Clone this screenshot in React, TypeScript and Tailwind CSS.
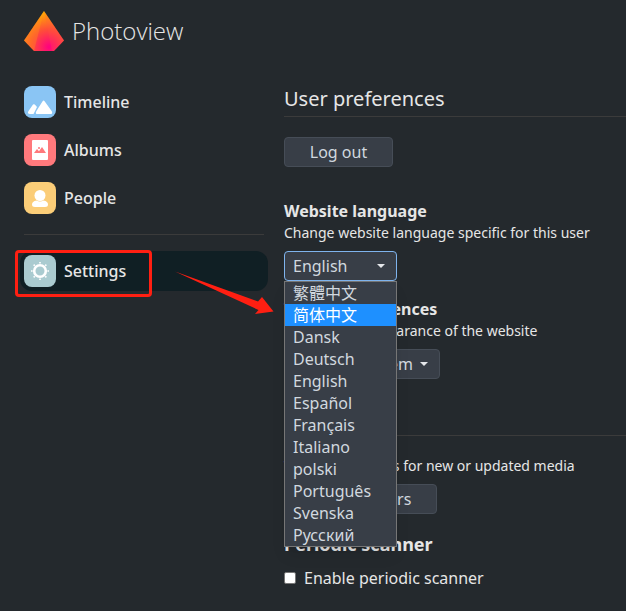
import type { ReactNode } from "react";

const languages = [
  "繁體中文",
  "简体中文",
  "Dansk",
  "Deutsch",
  "English",
  "Español",
  "Français",
  "Italiano",
  "polski",
  "Português",
  "Svenska",
  "Русский",
];

function Logo() {
  return (
    <svg viewBox="0 0 40 40" className="h-10 w-10" aria-hidden="true">
      <defs>
        <radialGradient id="glow" gradientUnits="userSpaceOnUse" cx="25" cy="36" r="36">
          <stop offset="0" stopColor="#ff0080" />
          <stop offset="0.5" stopColor="#ff4f37" />
          <stop offset="1" stopColor="#ffb000" />
        </radialGradient>
      </defs>
      <path d="M20 0L0 29.500 10 40H30L40 29.500Z" fill="url(#glow)" />
      <path d="M20 0L0 29.500 10 40Z" fill="#ffa010" opacity="0.3" />
      <path d="M20 0L28 40H30L40 29.500Z" fill="#ff5a3c" opacity="0.2" />
    </svg>
  );
}

function TimelineIcon() {
  return (
    <svg viewBox="0 0 32 32" className="h-8 w-8 shrink-0" aria-hidden="true">
      <rect width="32" height="32" rx="8" fill="#8ac5f4" />
      <path
        d="M18.600 15.200q1-1.200 2 0l7.200 10q1.200 2.800-1.400 2.800H13.500q-2.600 0-1.200-2.800zM9 18.600q.9-.9 1.800 0l2.200 2.500-3.500 6.900H6q-3-.3-1.600-2.800z"
        fill="#fff"
      />
    </svg>
  );
}

function AlbumsIcon() {
  return (
    <svg viewBox="0 0 32 32" className="h-8 w-8 shrink-0" aria-hidden="true">
      <rect width="32" height="32" rx="8" fill="#ff797c" />
      <rect x="8" y="6" width="16" height="20" rx="1" fill="#fff" />
      <path d="M10 19l3-4 2 2.300 3-4.300 4 6z" fill="#ff797c" />
      <circle cx="15" cy="14" r="1" fill="#ff797c" />
    </svg>
  );
}

function PeopleIcon() {
  return (
    <svg viewBox="0 0 32 32" className="h-8 w-8 shrink-0" aria-hidden="true">
      <rect width="32" height="32" rx="8" fill="#fbcd78" />
      <circle cx="16" cy="13.500" r="5.500" fill="#fff" />
      <path d="M12.500 18.500q3.500 2 7 0 4.500.9 4.500 4Q24 25 21 25H11q-3 0-3-2.500 0-3.100 4.500-4z" fill="#fff" />
    </svg>
  );
}

function SettingsIcon() {
  const teeth = [0, 45, 90, 135, 180, 225, 270, 315];
  return (
    <svg viewBox="0 0 32 32" className="h-8 w-8 shrink-0" aria-hidden="true">
      <rect width="32" height="32" rx="8" fill="#aacbd0" />
      <circle cx="16" cy="16" r="5.800" fill="none" stroke="#fff" strokeWidth="2.600" />
      {teeth.map((a) => (
        <path key={a} d="M15.200 7h1.600v1.600h-1.600z" fill="#fff" transform={`rotate(${a} 16 16)`} />
      ))}
    </svg>
  );
}

function NavItem({ icon, label, active }: { icon: ReactNode; label: string; active?: boolean }) {
  return (
    <a
      href="#"
      aria-current={active ? "page" : undefined}
      className={
        active
          ? "flex items-center gap-2 rounded-xl bg-[#101f24] p-1 font-medium"
          : "flex items-center gap-2 rounded-xl p-1 font-medium"
      }
    >
      {icon}
      <span>{label}</span>
    </a>
  );
}

function Caret() {
  return (
    <svg viewBox="0 0 8 4" className="pointer-events-none absolute right-3 top-3 mt-px h-1 w-2" aria-hidden="true">
      <path d="M0 0h8L4 4z" fill="#e5e7eb" />
    </svg>
  );
}

const control = "h-[30px] rounded-sm border border-[#464d57] bg-[#383e47] text-[#d1d8df]";

export default function App() {
  return (
    <div className="min-h-screen bg-[#24292d] font-['Noto_Sans','Noto_Sans_CJK_SC',sans-serif] text-base leading-6 text-[#e6e6e6]">
      <header className="flex h-[62px] items-center gap-2 px-6">
        <Logo />
        <h1 className="font-['Open_Sans',sans-serif] text-2xl font-light">Photoview</h1>
      </header>
      <div className="flex pt-5">
        <nav className="relative flex w-[284px] shrink-0 flex-col gap-2 pl-5 pr-4">
          <NavItem icon={<TimelineIcon />} label="Timeline" />
          <NavItem icon={<AlbumsIcon />} label="Albums" />
          <NavItem icon={<PeopleIcon />} label="People" />
          <hr className="mx-1 my-2 border-[#3b3b3b]" />
          <NavItem icon={<SettingsIcon />} label="Settings" active />
          <div className="absolute left-[15px] top-[168px] h-[47px] w-[137px] rounded-sm border-3 border-[#ff1f12]" />
          <svg viewBox="0 0 100 46" className="absolute left-[174px] top-[188px] z-20 h-[46px] w-[100px]" aria-hidden="true">
            <path d="M1 1.500L84 31.500 88 27 99.500 41.500 81 44 84.500 40z" fill="#ff1f12" />
          </svg>
        </nav>
        <main className="min-w-0 flex-1">
          <section>
            <h2 className="border-b border-[#3b3b3b] py-0.5 text-xl leading-[30px]">User preferences</h2>
            <button type="button" className={`${control} mt-5 block w-[109px]`}>
              Log out
            </button>
            <label htmlFor="language" className="mt-8 block">
              <span className="block font-bold">Website language</span>
              <span className="block text-sm leading-5">Change website language specific for this user</span>
            </label>
            <div className="relative mt-2 w-[113px]">
              <select
                id="language"
                defaultValue="English"
                className="block h-[30px] w-full appearance-none rounded-sm border border-[#7fb4ee] bg-[#383e47] px-2 leading-6 text-[#d1d8df] outline-none"
              >
                {languages.map((l) => (
                  <option key={l}>{l}</option>
                ))}
              </select>
              <Caret />
              <ul
                role="listbox"
                aria-label="Website language"
                className="absolute left-0 top-full z-10 w-full border border-[#767676] bg-[#383e47] leading-[22px] text-[#d1d8df] shadow-lg"
              >
                {languages.map((l) => (
                  <li
                    key={l}
                    role="option"
                    aria-selected={l === "简体中文"}
                    className={l === "简体中文" ? "h-[22px] bg-[#1e90ff] px-2 text-white" : "h-[22px] px-2"}
                  >
                    {l}
                  </li>
                ))}
              </ul>
            </div>
            <label htmlFor="theme" className="mt-4 block">
              <span className="block font-bold">Theme preferences</span>
              <span className="block text-sm leading-5">Change the appearance of the website</span>
            </label>
            <div className="relative mt-2 w-[156px]">
              <select
                id="theme"
                className="block h-[30px] w-full appearance-none rounded-sm border border-[#464d57] bg-[#383e47] px-2 leading-6 text-[#d1d8df]"
              >
                <option>Same as system</option>
              </select>
              <Caret />
            </div>
          </section>
          <section className="mt-[22px]">
            <h2 className="border-b border-[#3b3b3b] py-0.5 text-xl leading-[30px]">Scanner</h2>
            <p className="mt-5 text-sm leading-5">Will scan all users for new or updated media</p>
            <button type="button" className={`${control} mt-2 block w-[153px]`}>
              Scan all users
            </button>
            <h3 className="mt-[18px] text-lg leading-6 font-bold">Periodic scanner</h3>
            <label className="mt-2 flex items-center gap-2 pt-0.5">
              <input
                type="checkbox"
                className="h-3 w-3 appearance-none rounded-xs border border-[#767676] bg-white"
              />
              Enable periodic scanner
            </label>
          </section>
        </main>
      </div>
    </div>
  );
}
